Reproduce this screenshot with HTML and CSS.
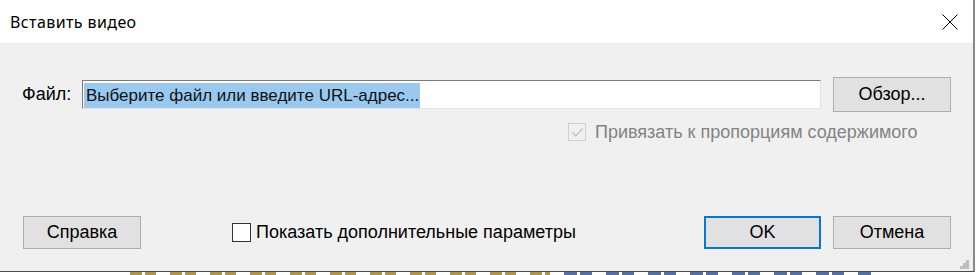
FILE: index.html
```html
<!DOCTYPE html>
<html>
	<head>
		<meta charset="UTF-8"/>
		<title>Вставить видео</title>
		<link rel="stylesheet" href="styles.css">
	</head>
	<body>
		<div class="Dialog">
			<div class="TitleBar">
				<span class="Title">Вставить видео</span>
				<span class="Close">
					<svg width="16" height="16" viewBox="0 0 16 16"><path d="M0.5 0.5 L15.5 15.5 M15.5 0.5 L0.5 15.5" stroke="#000" stroke-width="1" fill="none"/></svg>
				</span>
			</div>
			<div class="Content">
				<div class="FileRow">
					<span class="Label">Файл:</span>
					<div class="Input"><span class="Selected">Выберите файл или введите URL-адрес...</span></div>
					<span class="Button">Обзор...</span>
				</div>
				<div class="AspectRow">
					<span class="Check Disabled">
						<svg width="13" height="13" viewBox="0 0 13 13"><path d="M2 6.5 L5 9.5 L11 3" stroke="#c4c4c4" stroke-width="1.2" fill="none"/></svg>
					</span>
					<span class="DisabledText">Привязать к пропорциям содержимого</span>
				</div>
				<div class="Footer">
					<span class="Button">Справка</span>
					<label class="More">
						<span class="Check"></span>
						<span>Показать дополнительные параметры</span>
					</label>
					<span class="Button Default">OK</span>
					<span class="Button">Отмена</span>
				</div>
				<div class="Grip">
					<svg width="9" height="9" viewBox="0 0 9 9" fill="#bdbdbd">
						<rect x="6" y="0" width="3" height="3"/>
						<rect x="3" y="3" width="3" height="3"/><rect x="6" y="3" width="3" height="3"/>
						<rect x="0" y="6" width="3" height="3"/><rect x="3" y="6" width="3" height="3"/><rect x="6" y="6" width="3" height="3"/>
					</svg>
				</div>
			</div>
		</div>
		<div class="Behind">
			<div class="Gold"></div>
			<div class="Blue"></div>
		</div>
	</body>
</html>
```

FILE: styles.css
```css
* {
	margin: 0;
	padding: 0;
	box-sizing: border-box;
}
html, body {
	background: #fff;
	overflow: hidden;
}
body {
	width: 978px;
	height: 275px;
	font: 18px "Liberation Sans", Arial, sans-serif;
	color: #000;
}
.Dialog {
	width: 975px;
	height: 272px;
	border-right: 2px solid #8a8a8a;
	border-bottom: 1px solid #4a4a4a;
	display: flex;
	flex-direction: column;
}
.TitleBar {
	height: 43px;
	flex: none;
	background: #fff;
	display: flex;
	align-items: center;
	justify-content: space-between;
	padding: 0 15px 0 10px;
}
.Title {
	font: 16px "Noto Sans", "Open Sans", sans-serif;
	color: #000;
	letter-spacing: 0.4px;
}
.Close {
	display: flex;
	width: 16px;
	height: 16px;
}
.Content {
	flex: 1;
	background: #f0f0f0;
	position: relative;
	padding: 34px 22px 0 22px;
}
.FileRow {
	display: flex;
	align-items: center;
	height: 35px;
}
.Label {
	width: 60px;
	flex: none;
}
.Input {
	width: 739px;
	height: 29px;
	background: #fff;
	border-top: 1px solid #7a7a7a;
	border-left: 1px solid #7a7a7a;
	border-right: 1px solid #e3e3e3;
	border-bottom: 1px solid #e3e3e3;
	padding: 1px 0 0 1px;
	display: flex;
	align-items: center;
	color: #111;
	font-size: 17px;
}
.Selected {
	background: #99c9ef;
	line-height: 25px;
	padding: 0 1px 0 2px;
}
.Button {
	width: 118px;
	height: 35px;
	flex: none;
	background: #e1e1e1;
	border: 1px solid #adadad;
	display: flex;
	align-items: center;
	justify-content: center;
	margin-left: 12px;
}
.AspectRow {
	display: flex;
	align-items: center;
	margin: 11px 0 0 546px;
	height: 18px;
}
.Check {
	width: 19px;
	height: 19px;
	border: 1px solid #333;
	background: #fff;
	flex: none;
	display: flex;
	align-items: center;
	justify-content: center;
}
.Check.Disabled {
	border-color: #cfcfcf;
	background: #f0f0f0;
	width: 18px;
	height: 18px;
}
.Check.Disabled svg {
	width: 15px;
	height: 15px;
}
.DisabledText {
	color: #838383;
	margin-left: 9px;
}
.Footer {
	display: flex;
	align-items: center;
	margin-top: 75px;
	height: 33px;
	margin-left: 1px;
}
.Footer .Button {
	height: 33px;
}
.Footer .Button:first-child {
	margin-left: 0;
}
.More {
	flex: 1;
	display: flex;
	align-items: center;
	gap: 5px;
	margin-left: 91px;
}
.Default {
	border: 2px solid #0078d7;
	width: 117px;
	margin-left: 0;
}
.Grip {
	position: absolute;
	right: 4px;
	bottom: 2px;
	display: flex;
}
.Behind {
	height: 3px;
	display: flex;
	padding-left: 130px;
	gap: 14px;
}
.Gold {
	width: 420px;
	opacity: 0.8;
	background: repeating-linear-gradient(90deg, #9a7a1c 0 12px, transparent 12px 15px, #9a7a1c 15px 26px, transparent 26px 40px);
}
.Blue {
	width: 310px;
	opacity: 0.8;
	background: repeating-linear-gradient(90deg, #2a4a8a 0 13px, transparent 13px 16px, #2a4a8a 16px 28px, transparent 28px 42px);
}
```
